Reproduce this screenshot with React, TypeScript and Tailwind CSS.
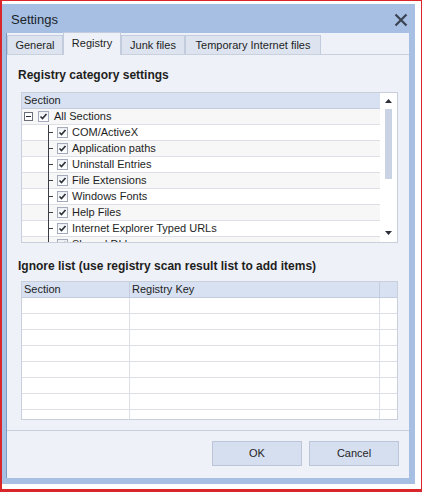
import React from "react";

const treeItems = [
  "COM/ActiveX",
  "Application paths",
  "Uninstall Entries",
  "File Extensions",
  "Windows Fonts",
  "Help Files",
  "Internet Explorer Typed URLs",
  "Shared DLLs",
];

const tabs = [
  { label: "General", w: "w-[56px]" },
  { label: "Registry", w: "w-[58px]", active: true },
  { label: "Junk files", w: "w-[64px]" },
  { label: "Temporary Internet files", w: "w-[136px]" },
];

const Check: React.FC = () => (
  <span className="w-[11px] h-[11px] shrink-0 border border-[#a3abbb] bg-gradient-to-b from-[#eef0f4] to-[#ffffff] flex items-center justify-center">
    <svg width="9" height="9" viewBox="0 0 9 9">
      <path d="M1.5 4.5 L3.5 6.5 L7.5 2" fill="none" stroke="#2b2f38" strokeWidth="1.6" />
    </svg>
  </span>
);

const TreePanel: React.FC = () => (
  <div className="h-[151px] ml-[14px] w-[377px] border border-[#c9d0dc] bg-white flex overflow-hidden">
    <div className="flex-1 flex flex-col">
      <div className="h-[16px] shrink-0 bg-[#d7e1f1] border-b border-[#c3cddd] flex items-center pl-[2px]">
        Section
      </div>
      <div className="h-[16px] shrink-0 bg-[#f7f7f7] border-b border-[#dcdfe5] flex items-center">
        <span className="ml-[2px] w-[9px] h-[9px] border border-[#6b6f77] bg-white flex items-center justify-center">
          <span className="w-[5px] h-px bg-[#2b2f38]" />
        </span>
        <span className="ml-[5px]">
          <Check />
        </span>
        <span className="ml-[5px]">All Sections</span>
      </div>
      {treeItems.map((item, i) => (
        <div
          key={item}
          className={`h-[16px] shrink-0 border-b border-[#dcdfe5] flex items-center relative ${
            i % 2 === 0 ? "bg-white" : "bg-[#f7f7f7]"
          }`}
        >
          <span className="absolute left-[26px] top-0 bottom-[-1px] w-px bg-[#3a3d44]" />
          <span className="absolute left-[26px] top-[7px] w-[5px] h-px bg-[#3a3d44]" />
          <span className="ml-[35px]">
            <Check />
          </span>
          <span className="ml-[4px] whitespace-nowrap">{item}</span>
        </div>
      ))}
    </div>
    <div className="w-[17px] shrink-0 bg-white flex flex-col items-center">
      <svg width="7" height="4" viewBox="0 0 7 4" className="mt-[6px]">
        <path d="M0 4 L3.5 0 L7 4 Z" fill="#2b2f38" />
      </svg>
      <span className="mt-[6px] w-[7px] h-[70px] bg-[#c9d3e3]" />
      <span className="flex-1" />
      <svg width="7" height="4" viewBox="0 0 7 4" className="mb-[7px]">
        <path d="M0 0 L7 0 L3.5 4 Z" fill="#2b2f38" />
      </svg>
    </div>
  </div>
);

const IgnoreTable: React.FC = () => (
  <div className="h-[139px] ml-[14px] w-[377px] border border-[#c9d0dc] bg-white overflow-hidden">
    <div className="h-[16px] bg-[#d7e1f1] border-b border-[#c3cddd] flex">
      <div className="w-[108px] border-r border-[#c3cddd] pl-[2px] flex items-center">Section</div>
      <div className="w-[250px] border-r border-[#c3cddd] pl-[2px] flex items-center">Registry Key</div>
      <div className="flex-1" />
    </div>
    {Array.from({ length: 8 }).map((_, i) => (
      <div key={i} className="h-[16px] border-b border-[#dcdfe5] flex w-[375px]">
        <div className="w-[108px] border-r border-[#dcdfe5]" />
        <div className="w-[250px] border-r border-[#dcdfe5]" />
        <div className="flex-1 bg-white" />
      </div>
    ))}
  </div>
);

export default function App() {
  return (
    <div
      className="w-[422px] h-[492px] bg-white border-l-2 border-t border-r border-b-[3px] border-[#d9262b] pt-[3px] pr-[4px] pb-[5px] text-[11px] text-[#1e1e1e]"
      style={{ fontFamily: '"Liberation Sans", Arial, sans-serif' }}
    >
      <div className="w-[413px] h-[480px] bg-[#a6bfe3] flex flex-col pl-[4px] pr-[6px] pb-[6px]">
        <div className="h-[29px] shrink-0 flex items-center justify-between pl-[5px] pr-[1px] pt-[3px]">
          <span className="text-[13px] text-[#1a1f2a]">Settings</span>
          <svg width="14" height="14" viewBox="0 0 14 14">
            <path d="M1.5 1.5 L12.5 12.5 M12.5 1.5 L1.5 12.5" stroke="#3b4250" strokeWidth="2.2" />
          </svg>
        </div>
        <div className="flex-1 bg-[#eef1f7] border-l border-[#7f9ac2] flex flex-col">
          <div className="h-[22px] shrink-0 flex items-end border-b border-[#c9d1df]">
            {tabs.map((t) =>
              t.active ? (
                <div
                  key={t.label}
                  className={`${t.w} h-[23px] mb-[-1px] bg-[#eef1f7] border border-b-0 border-[#c3ccdc] flex items-center justify-center pb-[2px]`}
                >
                  {t.label}
                </div>
              ) : (
                <div
                  key={t.label}
                  className={`${t.w} h-[19px] bg-[#dde4ef] border border-b-0 border-[#c3ccdc] flex items-center justify-center`}
                >
                  {t.label}
                </div>
              )
            )}
          </div>
          <div className="h-[376px] shrink-0 flex flex-col border-b border-[#c9d1df]">
            <div className="h-[16px] mt-[12px] ml-[11px] text-[12px] font-bold flex items-center">
              Registry category settings
            </div>
            <div className="mt-[9px]">
              <TreePanel />
            </div>
            <div className="h-[16px] mt-[15px] ml-[11px] text-[12px] font-bold flex items-center">
              Ignore list (use registry scan result list to add items)
            </div>
            <div className="mt-[7px]">
              <IgnoreTable />
            </div>
          </div>
          <div className="flex-1 flex justify-end items-start pt-[10px] pr-[10px] gap-[7px]">
            <button className="w-[90px] h-[25px] bg-[#d6dfef] border border-[#bcc6d8] text-[11px]">OK</button>
            <button className="w-[90px] h-[25px] bg-[#d6dfef] border border-[#bcc6d8] text-[11px]">Cancel</button>
          </div>
        </div>
      </div>
    </div>
  );
}
